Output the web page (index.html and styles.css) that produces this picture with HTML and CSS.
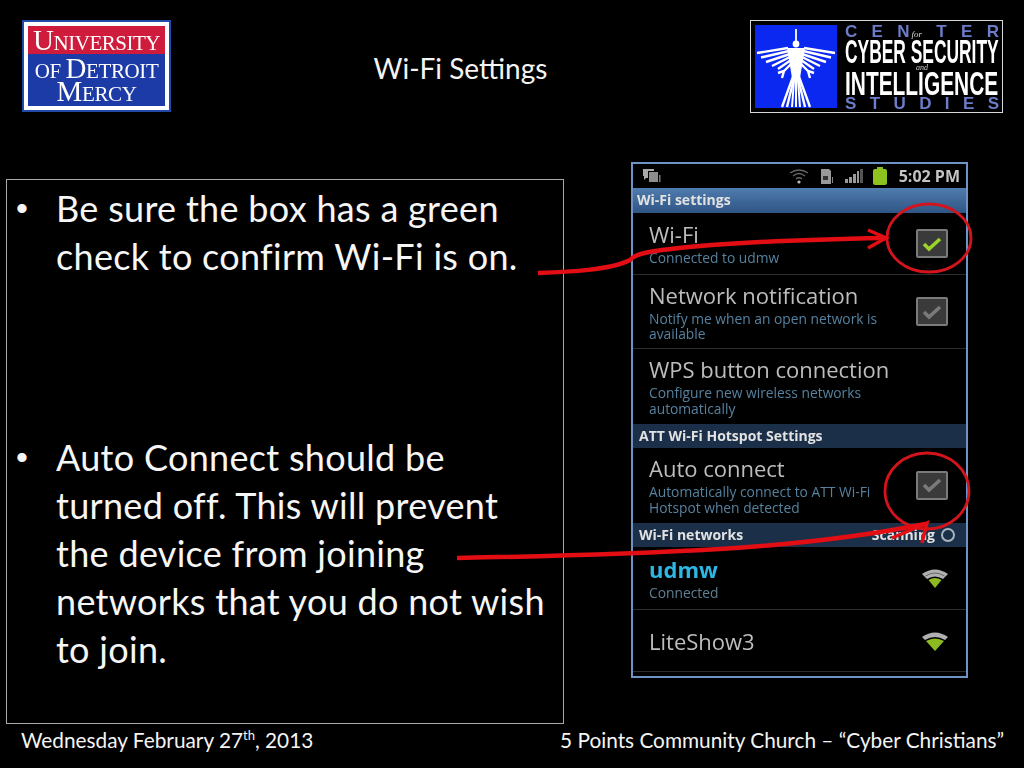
FILE: index.html
```html
<!DOCTYPE html>
<html lang="en">
<head>
    <meta charset="UTF-8">
    <title>Wi-Fi Settings</title>
    <link rel="stylesheet" href="styles.css">
</head>
<body>
<div class="slide">
    <header class="slide-head">
        <div class="udm-logo">
            <div class="udm-red"><span class="udm-big">U</span>NIVERSITY</div>
            <div class="udm-blue">
                <div class="udm-line">OF <span class="udm-big">D</span>ETROIT</div>
                <div class="udm-line"><span class="udm-big">M</span>ERCY</div>
            </div>
        </div>
        <h1 class="slide-title">Wi-Fi Settings</h1>
        <div class="ccis-logo">
            <div class="ccis-bird">
                <svg width="82" height="83" viewBox="3 3 82 83">
                    <g stroke="#fff" fill="none">
                        <path d="M44 7V22" stroke-width="1.800"/>
                        <g stroke-width="2.400">
                            <path d="M5 31 36 26"/>
                            <path d="M9 35.500 37 29"/>
                            <path d="M14 40 38 32"/>
                            <path d="M20 44 38 35"/>
                            <path d="M26 47 39 38"/>
                            <path d="M39 42 32 49 26 51M32 49 30 56"/>
                            <path d="M42 52 30 85"/>
                            <path d="M43 52 35 85"/>
                        </g>
                        <g stroke-width="2.400" transform="matrix(-1 0 0 1 88 0)">
                            <path d="M5 31 36 26"/>
                            <path d="M9 35.500 37 29"/>
                            <path d="M14 40 38 32"/>
                            <path d="M20 44 38 35"/>
                            <path d="M26 47 39 38"/>
                            <path d="M39 42 32 49 26 51M32 49 30 56"/>
                            <path d="M42 52 30 85"/>
                            <path d="M43 52 35 85"/>
                        </g>
                        <path d="M44 52V85M42.500 52 40 85M45.500 52 48 85" stroke-width="2"/>
                    </g>
                    <circle cx="44" cy="22" r="3.400" fill="#fff"/>
                    <path d="M35 26H53L48 56H40Z" fill="#fff"/>
                </svg>
            </div>
            <div class="ccis-text">
                <div class="ccis-spaced">
                    <span>C</span><span>E</span><span>N<i class="ccis-small">for</i></span><span>T</span><span>E</span><span>R</span>
                </div>
                <div class="ccis-wide">CYBER SECURITY</div>
                <div class="ccis-and">and</div>
                <div class="ccis-wide ccis-intel">INTELLIGENCE</div>
                <div class="ccis-spaced">
                    <span>S</span><span>T</span><span>U</span><span>D</span><span>I</span><span>E</span><span>S</span>
                </div>
            </div>
        </div>
    </header>

    <main class="slide-main">
        <ul class="text-box">
            <li class="bullet bullet-first">Be sure the box has a green check to confirm Wi-Fi is on.</li>
            <li class="bullet">Auto Connect should be turned off. This will prevent the device from joining networks that you do not wish to join.</li>
        </ul>

        <div class="phone">
            <div class="status-bar">
                <svg class="notify-icon" width="18" height="16" viewBox="0 0 18 16">
                    <path d="M0 1H11V3H5V10H3L1 12V8H0Z" fill="#a9a9a9"/>
                    <rect x="6" y="4" width="9" height="10" fill="#8d8d8d"/>
                    <rect x="16" y="7" width="1.500" height="7" fill="#777"/>
                </svg>
                <svg width="20" height="16" viewBox="0 0 20 16">
                    <g fill="none" stroke="#666" stroke-width="1.300">
                        <path d="M1 5Q10 -1 19 5"/>
                        <path d="M4 8Q10 3 16 8"/>
                        <path d="M7 11Q10 8.500 13 11"/>
                    </g>
                    <circle cx="10" cy="14" r="1.600" fill="#bbb"/>
                </svg>
                <svg width="12" height="15" viewBox="0 0 12 15">
                    <path d="M0 0H8L10 2V15H0Z" fill="#999"/>
                    <rect x="2" y="7" width="5" height="4" fill="#333"/>
                    <rect x="11" y="8" width="1" height="6" fill="#888"/>
                </svg>
                <svg width="18" height="14" viewBox="0 0 18 14">
                    <path d="M0 10H3V14H0ZM4 8H7V14H4ZM8 5H11V14H8ZM12 2H14V14H12Z" fill="#9a9a9a"/>
                    <path d="M15 0H18V14H15Z" fill="#555"/>
                </svg>
                <svg class="battery" width="14" height="18" viewBox="0 0 14 18">
                    <rect x="4" y="0" width="6" height="2" fill="#8cc020"/>
                    <rect x="0" y="2" width="14" height="16" rx="2" fill="#8dc21f"/>
                </svg>
                <span class="status-time">5:02 PM</span>
            </div>

            <div class="section section-top">Wi-Fi settings</div>
            <div class="row row-one">
                <div class="row-text">
                    <div class="row-title">Wi-Fi</div>
                    <div class="row-sub">Connected to udmw</div>
                </div>
                <div class="check check-on">
                    <svg width="20" height="16" viewBox="0 0 20 16"><path d="M2 8 7 13 18 3" fill="none" stroke="#9cd32a" stroke-width="3.600"/></svg>
                </div>
            </div>
            <div class="row row-two">
                <div class="row-text">
                    <div class="row-title">Network notification</div>
                    <div class="row-sub">Notify me when an open network is<br>available</div>
                </div>
                <div class="check">
                    <svg width="20" height="16" viewBox="0 0 20 16"><path d="M2 8 7 13 18 3" fill="none" stroke="#7a7a7a" stroke-width="3.600"/></svg>
                </div>
            </div>
            <div class="row row-two row-plain">
                <div class="row-text">
                    <div class="row-title">WPS button connection</div>
                    <div class="row-sub">Configure new wireless networks<br>automatically</div>
                </div>
            </div>

            <div class="section">ATT Wi-Fi Hotspot Settings</div>
            <div class="row row-two row-plain">
                <div class="row-text">
                    <div class="row-title">Auto connect</div>
                    <div class="row-sub">Automatically connect to ATT Wi-Fi<br>Hotspot when detected</div>
                </div>
                <div class="check">
                    <svg width="20" height="16" viewBox="0 0 20 16"><path d="M2 8 7 13 18 3" fill="none" stroke="#7a7a7a" stroke-width="3.600"/></svg>
                </div>
            </div>

            <div class="section section-split">
                <span>Wi-Fi networks</span>
                <span class="scanning">Scanning
                    <svg width="16" height="16" viewBox="0 0 16 16"><circle cx="8" cy="8" r="6" fill="none" stroke="#a8b4bd" stroke-width="2"/></svg>
                </span>
            </div>
            <div class="row row-one row-tall">
                <div class="row-text">
                    <div class="row-title row-link">udmw</div>
                    <div class="row-sub row-sub-grey">Connected</div>
                </div>
                <svg width="26" height="20" viewBox="0 0 26 20">
                    <path d="M0 6Q13 -3 26 6L21 11Q13 6 5 11Z" fill="#b0b0b0"/>
                    <path d="M3.500 8Q13 2 22.500 8" fill="none" stroke="#666"/>
                    <path d="M6.500 12Q13 8 19.500 12L13 20Z" fill="#8dbb1f"/>
                </svg>
            </div>
            <div class="row row-one">
                <div class="row-text">
                    <div class="row-title">LiteShow3</div>
                </div>
                <svg width="26" height="20" viewBox="0 0 26 20">
                    <path d="M0 6Q13 -3 26 6L23 9Q13 3 3 9Z" fill="#b0b0b0"/>
                    <path d="M4 10Q13 5 22 10L13 20Z" fill="#8dbb1f"/>
                </svg>
            </div>
        </div>
    </main>

    <footer class="slide-foot">
        <span>Wednesday February 27<sup>th</sup>, 2013</span>
        <span>5 Points Community Church – “Cyber Christians”</span>
    </footer>

    <!-- red marks drawn over the slide -->
    <svg class="marks" width="1024" height="768" viewBox="0 0 1024 768">
        <g fill="none" stroke="#e30d14">
            <ellipse cx="929" cy="238" rx="42" ry="34" stroke="#d4141c" stroke-width="2.800"/>
            <ellipse cx="927" cy="491" rx="42" ry="38" stroke="#d4141c" stroke-width="2.800"/>
            <path d="M538 273C570 272 610 270 630 260C636 252 660 250 700 246C760 241 830 239 884 238" stroke-width="4.500"/>
            <path d="M868 230 886 238 868 248" stroke-width="3.500"/>
            <path d="M457 558C560 556 650 553 720 549C800 544 870 535 925 524" stroke-width="4.500"/>
            <path d="M892 538 927 523 922 543" stroke-width="3.500"/>
        </g>
    </svg>
</div>
</body>
</html>
```

FILE: styles.css
```css
* {
    box-sizing: border-box;
}
body {
    margin: 0;
    background: #000;
    color: #fff;
    font-family: Lato, "Open Sans", sans-serif;
}
.slide {
    position: relative;
    width: 1024px;
    height: 768px;
    overflow: hidden;
    background: #000;
}
.marks {
    position: absolute;
    left: 0;
    top: 0;
}

/* header */
.slide-head {
    display: flex;
    justify-content: space-between;
    align-items: flex-start;
    padding: 20px 21px 0 22px;
    height: 113px;
}
.slide-title {
    margin: 32px 0 0;
    font-size: 28px;
    line-height: 32px;
    font-weight: 400;
    color: #f4f4f4;
}
.udm-logo {
    width: 149px;
    height: 92px;
    padding: 4px;
    background: #fff;
    border: 2px solid #2149a8;
    font-family: "Liberation Serif", serif;
    color: #fff;
    text-align: center;
    white-space: nowrap;
    filter: blur(0.3px);
}
.udm-red {
    height: 28px;
    background: #d01c3c;
    font-size: 21px;
    line-height: 29px;
    letter-spacing: -0.5px;
}
.udm-blue {
    height: 52px;
    padding-top: 4px;
    background: #1c3ba6;
    font-size: 21px;
    line-height: 20px;
    letter-spacing: -0.4px;
}
.udm-big {
    font-size: 29px;
}
.ccis-logo {
    display: flex;
    gap: 8px;
    width: 253px;
    height: 93px;
    padding: 4px 4px 3px 4px;
    border: 1px solid #d8d8d8;
    background: #000;
    filter: blur(0.3px);
}
.ccis-bird {
    width: 82px;
    height: 83px;
    background: #0a28f0;
    flex-shrink: 0;
}
.ccis-bird svg {
    display: block;
}
.ccis-text {
    width: 154px;
    font-family: "Liberation Sans", sans-serif;
}
.ccis-spaced {
    display: flex;
    justify-content: space-between;
    height: 14px;
    font-size: 17px;
    line-height: 14px;
    font-weight: 700;
    color: #6c7cc8;
}
.ccis-small {
    margin-left: 2px;
    font-family: "Liberation Serif", serif;
    font-size: 9px;
    font-weight: 400;
    color: #ddd;
}
.ccis-wide {
    height: 26px;
    font-size: 33px;
    line-height: 26px;
    font-weight: 700;
    white-space: nowrap;
    transform: scaleX(0.527);
    transform-origin: left center;
}
.ccis-intel {
    transform: scaleX(0.633);
}
.ccis-and {
    height: 6px;
    font-family: "Liberation Serif", serif;
    font-style: italic;
    font-size: 8px;
    line-height: 6px;
    text-align: center;
    color: #ccc;
}

/* main area */
.slide-main {
    display: flex;
    align-items: flex-start;
    gap: 67px;
    margin-top: 49px;
    padding-left: 6px;
}
.text-box {
    width: 558px;
    height: 545px;
    margin: 17px 0 0;
    padding: 4px 0 0;
    list-style: none;
    border: 1px solid #a8a8a8;
    font-size: 36px;
    line-height: 48px;
    letter-spacing: 0.3px;
    color: #f6f6f6;
}
.bullet {
    display: flex;
    padding-right: 7px;
}
.bullet::before {
    content: "•";
    flex: 0 0 40px;
    padding-left: 9px;
    font-family: "Liberation Sans", sans-serif;
    font-size: 34px;
}
.bullet-first {
    margin-bottom: 153px;
}

/* phone screenshot */
.phone {
    width: 337px;
    height: 516px;
    border: 2px solid #6f93c4;
    background: #000;
    font-family: "Open Sans", sans-serif;
    filter: blur(0.35px);
}
.status-bar {
    display: flex;
    align-items: center;
    height: 24px;
    padding: 0 6px 0 10px;
    gap: 12px;
}
.notify-icon {
    margin-right: auto;
}
.battery {
    margin-left: -2px;
}
.status-time {
    font-size: 16px;
    font-weight: 700;
    color: #c4c4c4;
}
.section {
    height: 24px;
    padding-left: 6px;
    background: #1b2f48;
    font-size: 14px;
    line-height: 24px;
    font-weight: 700;
    color: #e2e2e2;
}
.section-top {
    height: 25px;
    padding-left: 4px;
    background: linear-gradient(#4f7cae, #2f5584);
}
.section-split {
    display: flex;
    justify-content: space-between;
    padding-right: 10px;
}
.scanning {
    display: flex;
    align-items: center;
    gap: 5px;
}
.row {
    display: flex;
    align-items: center;
    justify-content: space-between;
    padding: 0 18px 0 16px;
    border-bottom: 1px solid #2c2c2c;
}
.row-one {
    height: 62px;
}
.row-tall {
    height: 63px;
}
.row-two {
    height: 74px;
}
.row-plain {
    height: 75px;
    padding-bottom: 1px;
    border-bottom: 0;
}
.row-title {
    font-size: 22px;
    line-height: 26px;
    color: #bdbdbd;
}
.row-link {
    font-weight: 700;
    color: #2db7e4;
}
.row-sub {
    margin-top: 3px;
    font-size: 13.800px;
    line-height: 15.500px;
    color: #56819f;
}
.row-sub-grey {
    color: #5f7f92;
}
.check {
    display: flex;
    align-items: center;
    justify-content: center;
    width: 32px;
    height: 29px;
    flex-shrink: 0;
    background: #3a3a3a;
    border: 2px solid #7b7b7b;
    border-radius: 2px;
}

/* footer */
.slide-foot {
    display: flex;
    justify-content: space-between;
    margin-top: 3px;
    padding: 0 20px 0 21px;
    font-size: 20.800px;
    line-height: 26px;
    color: #f4f4f4;
}
.slide-foot sup {
    font-size: 13px;
    line-height: 0;
}
```
